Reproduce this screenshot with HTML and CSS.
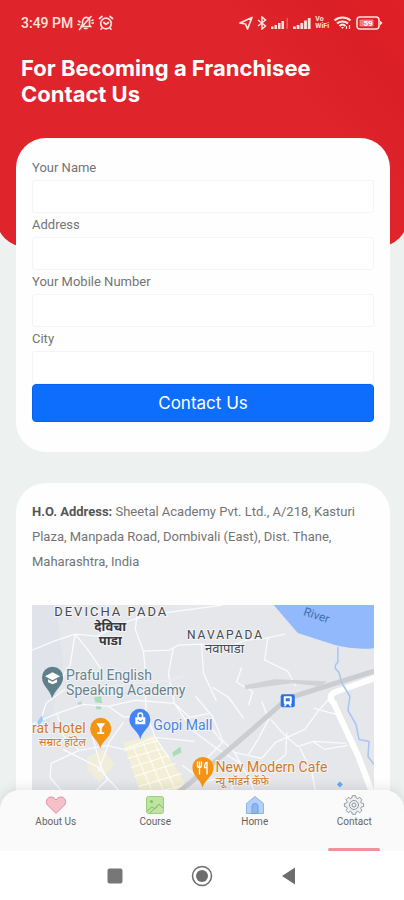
FILE: index.html
```html
<!DOCTYPE html>
<html lang="en">
<head>
  <meta charset="UTF-8">
  <meta name="viewport" content="width=device-width, initial-scale=1.0">
  <title>Contact Us</title>
  <link rel="stylesheet" href="styles.css">
</head>
<body>
  <div class="app">
    <main class="content">
      <header class="hero">
        <div class="status">
          <span class="time">3:49 PM</span>
          <svg width="17" height="16" viewBox="0 0 17 16" fill="none" stroke="#ffe3dc" stroke-width="1.6" stroke-linecap="round">
            <path d="M4 11.500L5.500 9.500V6.500C6 3.500 8 2 10 2.500C12 3 13 4.500 12.500 7V10L13.500 11.500H5M7.500 13.500H10M2.500 14.500L14 1.500M1.500 6L3 7M1 9.500H2.500M15 5.500L16 5M15 8H16.500"/>
          </svg>
          <svg width="16" height="16" viewBox="0 0 16 16" fill="none" stroke="#ffe3dc" stroke-width="1.7" stroke-linecap="round">
            <circle cx="8" cy="8.500" r="5.300"/>
            <path d="M1.500 3.500L4 1.500M14.500 3.500L12 1.500M5.800 7.500L8 9.500L10.500 7.500M4 13L3 14.200M12 13L13 14.200"/>
          </svg>
          <span class="spacer"></span>
          <svg width="14" height="14" viewBox="0 0 14 14" fill="none" stroke="#ffe3dc" stroke-width="1.7" stroke-linejoin="round">
            <path d="M1 7L13 1.500L8.500 13L6.500 8Z"/>
          </svg>
          <svg width="10" height="14" viewBox="0 0 10 14" fill="none" stroke="#ffe3dc" stroke-width="1.500">
            <path d="M1 4L8.500 10L5 13V1L8.500 4L1 10"/>
          </svg>
          <svg width="18" height="14" viewBox="0 0 18 14" fill="#ffe3dc">
            <path d="M0 10.500H2.500V13H0ZM3.500 9H6V13H3.500ZM7 7H9.500V13H7ZM10.500 5H13V13H10.500Z"/>
            <path d="M15.500 2H17V13H15.500Z" opacity=".3"/>
          </svg>
          <svg width="18" height="14" viewBox="0 0 18 14" fill="#ffe3dc">
            <path d="M0 10.500H2.800V13H0ZM3.700 9H6.500V13H3.700ZM7.400 7H10.200V13H7.400ZM11.100 4.500H13.900V13H11.100ZM14.800 2H17.600V13H14.800Z"/>
          </svg>
          <span class="vowifi">Vo<br>WiFi</span>
          <svg width="19" height="14" viewBox="0 0 19 14" fill="none" stroke="#ffe3dc" stroke-width="2.200">
            <path d="M1.500 4.500C6 .5 13 .5 17.500 4.500M4 7.500C7 4.800 12 4.800 15 7.500M6.500 10C8.500 8.300 10.500 8.300 12.500 10"/>
            <path d="M8 11H11L9.500 13Z" fill="#ffe3dc" stroke="none"/>
            <path d="M13.500 10V13M16.500 9V13" stroke-width="1.200"/>
          </svg>
          <svg width="27" height="14" viewBox="0 0 27 14">
            <rect x="1" y="1" width="22" height="12" rx="3" fill="none" stroke="#ffe3dc" stroke-width="1.500"/>
            <rect x="3.500" y="3.500" width="14" height="7" rx="1" fill="#ffd0ca" opacity=".55"/>
            <path d="M24 4.500L26.500 7L24 9.500Z" fill="#ffe3dc"/>
            <text class="battery" x="12" y="10" text-anchor="middle">59</text>
          </svg>
        </div>
        <h1 class="title">For Becoming a Franchisee<br>Contact Us</h1>
      </header>

      <form class="card form">
        <label class="label" for="name">Your Name</label>
        <input class="input" type="text" id="name">
        <label class="label" for="address">Address</label>
        <input class="input" type="text" id="address">
        <label class="label" for="mobile">Your Mobile Number</label>
        <input class="input" type="tel" id="mobile">
        <label class="label" for="city">City</label>
        <input class="input" type="text" id="city">
        <button type="button" class="btn">Contact Us</button>
      </form>

      <section class="card office">
        <p class="address"><strong>H.O. Address:</strong> Sheetal Academy Pvt. Ltd., A/218, Kasturi Plaza, Manpada Road, Dombivali (East), Dist. Thane, Maharashtra, India</p>
        <svg class="map" viewBox="0 0 341 280" preserveAspectRatio="xMidYMin slice" role="img" aria-label="Map of Dombivali">
          <rect width="341" height="280" fill="#e5e7eb"/>
          <path d="M0 0H24L31 58L18 118L0 130Z" fill="#e0e3e9"/>
          <!-- built-up area -->
          <path d="M91 137L122 130L137 152L157 185L142 206L111 196Z" fill="#f3efd6"/>
          <path d="M55 151L72 145L82 158L68 177L55 165Z" fill="#f0edd9"/>
          <!-- parks -->
          <g fill="#a9dbbd">
            <path d="M62 92L69 91L70 98L63 97ZM45 98L49 96L50 101ZM140 147L148 141L149 147L141 151ZM64 101L69 100V104H64Z"/>
            <path d="M93 87L117 81L119 83L95 90Z" opacity=".35"/>
          </g>
          <!-- small streets -->
          <g fill="none" stroke="#fafbfd" stroke-width="1.300">
            <path d="M0 45L22 36L43 29L65 31L93 17L116 10L190 0M43 29L38 60L27 77M43 29L56 45L69 64M105 7L103 24L111 46L137 45L146 40L169 39L188 44L214 35L234 33L252 29M111 46L113 64M141 42L136 69L142 98M169 39L171 68L184 96M180 82L196 92L211 113M113 88L114 109L123 132L137 153M0 119L25 108L51 99L76 101L103 95L142 98L157 112L178 108M76 101L92 112L113 109M25 108L31 130L47 145L75 140L91 144L123 132L162 136M47 145L19 158L18 172L29 185M31 144L65 161L92 191M60 130L68 159L75 174L59 190M91 117L77 137L66 166M163 91L180 111L190 135L202 147M142 98L160 125L184 143L208 158M202 147L218 176L226 200M202 147L229 153L243 137L272 124L285 106L303 86"/>
            <path d="M229 96L236 114L226 133L216 149M238 114L251 129L265 141L281 136L313 138M254 127L253 149L231 167L219 163M267 142L279 167L285 197M280 136L292 144L315 140M209 62L204 77L220 86L216 100M235 33L232 55L255 66L263 81M281 103L307 110L310 123M177 120L190 137L174 153M33 84L14 98L8 117M150 160L172 176L190 172M208 160L199 183L211 194"/>
          </g>
          <!-- lanes between the buildings -->
          <g fill="none" stroke="#fffef5" stroke-width="1">
            <path d="M92 145L125 135M95 153L130 143M99 162L136 150M102 171L143 158M106 181L149 168M110 190L155 179M101 142L126 200M111 138L137 199M121 134L147 194"/>
          </g>
          <!-- railway -->
          <path d="M341 66L255 93L213 130L158 177L132 198" fill="none" stroke="#cbcdd0" stroke-width="5"/>
          <path d="M60 84L92 79L139 75L150 71" fill="none" stroke="#e9ecef" stroke-width="2"/>
          <path d="M212 80L242 74L294 76L288 81L259 78L213 84Z" fill="#d0d2d4"/>
          <path d="M344 72L302 87Q294 91 301 98L309 116L325 150L344 200" fill="none" stroke="#fff" stroke-width="6"/>
          <!-- river -->
          <path d="M241 0L265 28L302 40Q322 45 341 43V0Z" fill="#91b9fb"/>
          <path d="M305 42V57Q299 62 306 67L309 78L317 91L315 105L323 119L326 134L336 136L335 151L341 159" fill="none" stroke="#a8c4f3" stroke-width="1.500"/>
          <text class="river" x="270" y="10" transform="rotate(18 270 10)">River</text>

          <g class="place" text-anchor="middle">
            <text x="79" y="11">DEVICHA PADA</text>
            <text class="hindi-bold" x="78" y="26">देविचा</text>
            <text class="hindi-bold" x="78" y="40">पाडा</text>
            <text class="place-small" x="193" y="34">NAVAPADA</text>
            <text class="hindi" x="192" y="48">नवापाडा</text>
          </g>
          <g class="school">
            <text x="34" y="75">Praful English</text>
            <text x="34" y="90">Speaking Academy</text>
          </g>
          <text class="mall" x="121" y="125">Gopi Mall</text>
          <g class="food">
            <text x="0" y="128">rat Hotel</text>
            <text class="hindi-food" x="7" y="141">सम्राट हॉटेल</text>
            <text x="183" y="167">New Modern Cafe</text>
            <text class="hindi-food" x="183" y="179">न्यू मॉडर्न कॅफे</text>
          </g>

          <!-- pins -->
          <path d="M20 93C18 84 10 81 10 72A10.500 10.500 0 0 1 31 72C31 81 23 84 20 93Z" fill="#5f7f8a"/>
          <path d="M13 71L20.500 67L28 71L20.500 75ZM16 74L20.500 76.500L25 74V77L20.500 79L16 77Z" fill="#fff"/>
          <path d="M68 143C66 134 58 132 58 123A10.500 10.500 0 0 1 79 123C79 132 71 134 68 143Z" fill="#f39412"/>
          <path d="M64 118H73L69.500 123V127H72V128.500H65V127H67.500V123Z" fill="#fff"/>
          <path d="M108 134C106 125 97 123 97 114A10.500 10.500 0 0 1 118 114C118 123 110 125 108 134Z" fill="#4385f5"/>
          <path d="M103 112H105V110A3 3 0 0 1 111 110V112H113V119H103ZM106.500 112H109.500V110A1.500 1.500 0 0 0 106.500 110Z" fill="#fff" fill-rule="evenodd"/>
          <path d="M105.500 114.500Q108 118 110.500 114.500" fill="none" stroke="#4385f5"/>
          <path d="M170 182C168 173 160 171 160 162A10.500 10.500 0 0 1 181 162C181 171 173 173 170 182Z" fill="#f39412"/>
          <path d="M165 156V160Q165 162 167 162V169M169 156V160Q169 162 167 162V156M174.500 169V157Q172 157 172 162H174.500" fill="none" stroke="#fff" stroke-width="1.300"/>
          <rect x="248" y="89" width="14" height="13" rx="2" fill="#2673e8"/>
          <path d="M252 91H258Q259 91 259 92V98L258 99L259 101H257L256 99H254L253 101H251L252 99L251 98V92Q251 91 252 91ZM253 93V96H257V93Z" fill="#fff" fill-rule="evenodd"/>
          <path d="M304 179L307 176L310 179L307 182Z" fill="#6ca8f5"/>
          <path d="M5 117L10 110L11 115L7 120Z" fill="#9fc5fb"/>
        </svg>
      </section>
    </main>

    <footer class="bottom">
      <nav class="tabs">
        <a class="tab" href="#about">
          <svg width="22" height="20" viewBox="0 0 22 20"><path d="M11 18.500L2.500 10C0 7 2 2 6 2C8.500 2 10 3.500 11 5C12 3.500 13.500 2 16 2C20 2 22 7 19.500 10Z" fill="#f6c0ca" stroke="#dc8f9d"/></svg>
          <span>About Us</span>
        </a>
        <a class="tab" href="#course">
          <svg width="22" height="20" viewBox="0 0 22 20"><rect x="2.500" y="1.500" width="17" height="17" rx="2" fill="#bfe3a0" stroke="#9fce7c"/><circle cx="7.500" cy="6.500" r="1.500" fill="#87bd65"/><path d="M3 16L8 12L11 14L15 9L19 13M6 18L15 9" fill="none" stroke="#87bd65"/></svg>
          <span>Course</span>
        </a>
        <a class="tab" href="#home">
          <svg width="22" height="20" viewBox="0 0 22 20"><path d="M2.500 8.500L11 1.500L19.500 8.500V18.500H2.500Z" fill="#b1d0fb" stroke="#8eb3e5" stroke-linejoin="round"/><path d="M8 18.500V11Q8 8.500 11 8.500Q14 8.500 14 11V18.500Z" fill="#8eb6f0" stroke="#779fdd"/></svg>
          <span>Home</span>
        </a>
        <a class="tab active" href="#contact">
          <svg width="22" height="20" viewBox="0 0 22 20" fill="#edf0f3" stroke="#929aa2" stroke-linejoin="round"><path d="M9.300 .700H12.700L13.200 3L14.700 3.600L16.700 2.400L19 4.700L17.700 6.700L18.300 8L20.600 8.500V11.500L18.300 12L17.700 13.400L19 15.300L16.700 17.600L14.700 16.300L13.200 17L12.700 19.300H9.300L8.800 17L7.300 16.300L5.300 17.600L3 15.300L4.300 13.400L3.700 12L1.400 11.500V8.500L3.700 8L4.300 6.700L3 4.700L5.300 2.400L7.300 3.600L8.800 3Z"/><circle cx="11" cy="10" r="4.500"/><circle cx="11" cy="10" r="2"/></svg>
          <span>Contact</span>
        </a>
      </nav>
      <div class="system">
        <button type="button" class="sys-btn" aria-label="Recent apps"><svg width="22" height="22" viewBox="0 0 22 22"><rect x="3.500" y="3.500" width="15" height="15" rx="2" fill="#777"/></svg></button>
        <button type="button" class="sys-btn" aria-label="Home screen"><svg width="22" height="22" viewBox="0 0 22 22"><circle cx="11" cy="11" r="9.500" fill="none" stroke="#6d6d6d" stroke-width="1.500"/><circle cx="11" cy="11" r="6" fill="#6d6d6d"/></svg></button>
        <button type="button" class="sys-btn" aria-label="Back"><svg width="22" height="22" viewBox="0 0 22 22"><path d="M4 11L17 2.500V19.500Z" fill="#6d6d6d"/></svg></button>
      </div>
    </footer>
  </div>
</body>
</html>
```
FILE: styles.css
```css
* {
  box-sizing: border-box;
}
body {
  margin: 0;
  font-family: Roboto, "Noto Sans", sans-serif;
  color: #747474;
  background: #edf1f0;
}
.app {
  height: 100vh;
  position: relative;
  overflow: hidden;
}
.content {
  height: 100%;
  overflow-x: hidden;
  overflow-y: auto;
  scrollbar-width: none;
  padding-bottom: 110px;
}
.hero {
  height: 247px;
  margin: 0 -4px;
  padding: 0 25px;
  border-radius: 0 0 30px 30px;
  background: linear-gradient(50deg, #e0242b 0%, #e0242b 70%, #da1f26 85%, #e01f26 100%);
  color: #fff;
}
.status {
  height: 46px;
  display: flex;
  align-items: center;
  gap: 4px;
  color: #ffe3dc;
}
.time {
  font-size: 14px;
  font-weight: 500;
}
.spacer {
  flex: 1;
}
.vowifi {
  font-size: 7px;
  line-height: 7px;
  font-weight: 700;
}
.battery {
  font-size: 8px;
  font-weight: 700;
  fill: #fff;
}
.title {
  margin: 9px 0 0;
  font-family: Inter, sans-serif;
  font-size: 22px;
  line-height: 26px;
  font-weight: 700;
}
.card {
  margin: 0 14px 31px 16px;
  padding: 16px;
  background: #fefefe;
  border-radius: 30px;
}
.form {
  position: relative;
  margin-top: -109px;
  padding: 18px 16px 30px;
  display: flex;
  flex-direction: column;
}
.label {
  font-size: 13px;
  line-height: 24px;
}
.input {
  width: 100%;
  height: 33px;
  padding: 0 8px;
  border: 1px solid #f4f4f4;
  border-radius: 3px;
  background: #fff;
  font: inherit;
}
.btn {
  height: 38px;
  border: 1px solid #0761ee;
  border-radius: 4px;
  background: #0d6efd;
  color: #fff;
  font-family: Inter, sans-serif;
  font-size: 17px;
}
.address {
  margin: 0 0 31px;
  font-size: 13px;
  line-height: 25px;
}
.address strong {
  color: #555;
}
.map {
  display: block;
  width: 100%;
  height: 280px;
}
.place {
  font-size: 13px;
  letter-spacing: 2px;
  fill: #45494e;
}
.place-small {
  font-size: 12px;
}
.hindi-bold,
.hindi {
  font-size: 13px;
  letter-spacing: 0;
}
.hindi-bold {
  font-weight: 700;
  fill: #383a3e;
}
.school {
  font-size: 14px;
  fill: #66828c;
}
.mall {
  font-size: 14px;
  fill: #4a84e0;
}
.food {
  font-size: 14px;
  fill: #d47a24;
}
.hindi-food {
  font-size: 11px;
}
.school,
.mall,
.food,
.place {
  stroke: #f3f4f6;
  stroke-width: 2px;
  paint-order: stroke;
}
.river {
  font-size: 12px;
  fill: #4170b5;
}
.bottom {
  position: absolute;
  left: 0;
  right: 0;
  bottom: 0;
}
.tabs {
  height: 61px;
  padding-left: 6px;
  display: grid;
  grid-template-columns: repeat(4, 1fr);
  border-radius: 20px 20px 0 0;
  background: rgba(250, 250, 250, 0.97);
  box-shadow: 0 -2px 12px rgba(0, 0, 0, 0.1);
}
.tab {
  padding-top: 5px;
  display: flex;
  flex-direction: column;
  align-items: center;
  font-size: 10px;
  line-height: 14px;
  color: #656565;
  text-decoration: none;
}
.tab.active::after {
  content: "";
  width: 52px;
  height: 3px;
  margin-top: auto;
  border-radius: 2px;
  background: #ef929d;
}
.system {
  height: 49px;
  display: flex;
  justify-content: center;
  align-items: center;
  gap: 65px;
  background: #fff;
}
.sys-btn {
  padding: 0;
  border: 0;
  background: none;
}
.sys-btn svg {
  display: block;
}
```
